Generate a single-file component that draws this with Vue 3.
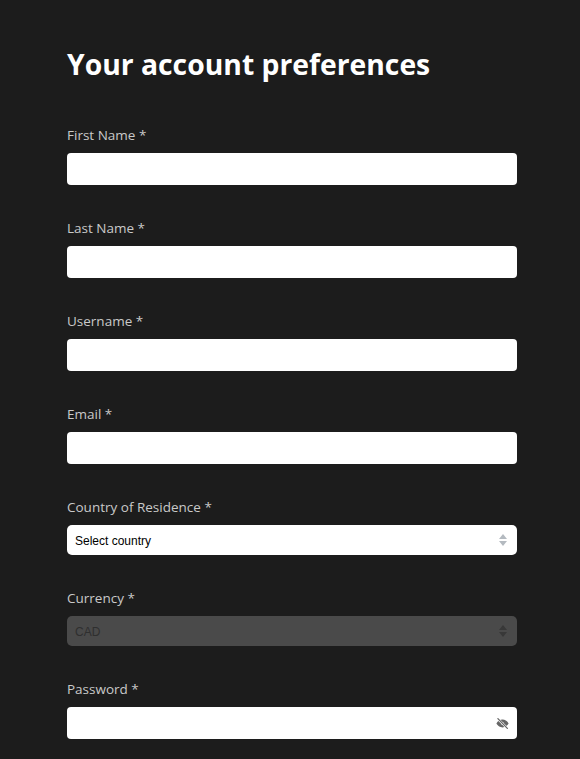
<script setup>
const textFields = [
  { label: 'First Name *', type: 'text' },
  { label: 'Last Name *', type: 'text' },
  { label: 'Username *', type: 'text' },
  { label: 'Email *', type: 'email' },
]
</script>

<template>
  <main class="page">
    <h1>Your account preferences</h1>

    <form class="form" @submit.prevent>
      <label v-for="field in textFields" :key="field.label" class="field">
        <span class="label">{{ field.label }}</span>
        <input class="input" :type="field.type" />
      </label>

      <label class="field">
        <span class="label">Country of Residence *</span>
        <span class="control">
          <select class="select">
            <option>Select country</option>
          </select>
          <svg class="updown" viewBox="0 0 8 12" width="8" height="12">
            <path d="M4 0 8 5H0zM0 7h8l-4 5z" fill="#b4bac0" />
          </svg>
        </span>
      </label>

      <label class="field">
        <span class="label">Currency *</span>
        <span class="control">
          <select class="select" disabled>
            <option>CAD</option>
          </select>
          <svg class="updown" viewBox="0 0 8 12" width="8" height="12">
            <path d="M4 0 8 5H0zM0 7h8l-4 5z" fill="#383838" />
          </svg>
        </span>
      </label>

      <label class="field">
        <span class="label">Password *</span>
        <span class="control">
          <input class="input" type="password" />
          <svg class="eye" viewBox="0 0 24 24" width="13" height="13" fill="none" stroke="#666" stroke-width="2.4" stroke-linecap="round" stroke-linejoin="round">
            <path d="M2 12s4-6 10-6 10 6 10 6-4 6-10 6S2 12 2 12z" fill="#666" />
            <circle cx="12" cy="12" r="2.4" fill="#fff" stroke="none" />
            <path d="M3 3l18 18" stroke="#fff" stroke-width="4" />
            <path d="M3.5 3l17.5 18" />
          </svg>
        </span>
      </label>
    </form>
  </main>
</template>

<style>
body {
  background: #1c1c1c;
}
</style>

<style scoped>
.page {
  box-sizing: border-box;
  width: 580px;
  padding: 44px 63px 20px 67px;
  font-family: "Open Sans", "Noto Sans", sans-serif;
}

h1 {
  margin: 0 0 40px;
  font-size: 28.3px;
  line-height: 41px;
  font-weight: 700;
  color: #fff;
}

.form {
  display: flex;
  flex-direction: column;
  gap: 33px;
}

.field {
  display: flex;
  flex-direction: column;
  gap: 8px;
}

.label {
  font-size: 13.5px;
  line-height: 20px;
  color: #c9c9c9;
}

.control {
  position: relative;
  display: block;
}

.input,
.select {
  display: block;
  box-sizing: border-box;
  width: 100%;
  margin: 0;
  border: 0;
  outline: 0;
  border-radius: 4px;
  background: #fff;
}

.input {
  height: 32px;
  padding: 0 30px 0 8px;
  font-size: 14px;
}

.select {
  height: 30px;
  padding: 2px 24px 0 8px;
  appearance: none;
  border-radius: 5px;
  font-family: "Liberation Sans", Arial, sans-serif;
  font-size: 12px;
  color: #000;
}

.select:disabled {
  background: #4a4a4a;
  color: #2f2f2f;
  opacity: 1;
}

.updown {
  position: absolute;
  top: 9px;
  right: 10px;
  pointer-events: none;
}

.eye {
  position: absolute;
  top: 10px;
  right: 8px;
  pointer-events: none;
}
</style>
